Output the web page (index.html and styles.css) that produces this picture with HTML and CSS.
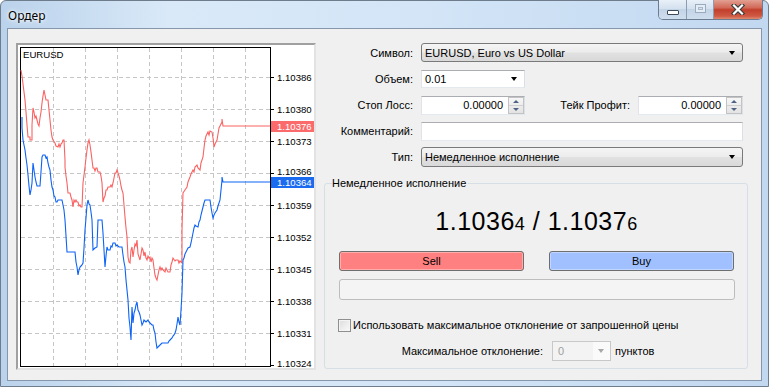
FILE: index.html
```html
<!DOCTYPE html>
<html>

<head>
  <meta charset="UTF-8">
  <title>Ордер</title>
  <link rel="stylesheet" href="styles.css">
</head>

<body>
  <div class="window">
    <div class="titlebar">
      <span class="title">Ордер</span>
      <div class="caption-buttons">
        <div class="cap-btn cap-min"><span class="min-glyph"></span></div>
        <div class="cap-btn cap-max"><span class="max-glyph"></span></div>
        <div class="cap-btn cap-close">
          <svg width="16" height="11" viewBox="0 0 16 11">
            <path d="M4 1.5 L12 9.5 M12 1.5 L4 9.5" stroke="#3b3b3b" stroke-width="4.4" stroke-linecap="square" />
            <path d="M4 1.5 L12 9.5 M12 1.5 L4 9.5" stroke="#ffffff" stroke-width="2.2" stroke-linecap="square" />
          </svg>
        </div>
      </div>
    </div>

    <div class="client">
      <!-- график тиков -->
      <div class="chart-panel">
        <svg class="chart" width="296" height="323" viewBox="18 45 296 323">
          <rect x="18" y="45" width="296" height="323" fill="#ffffff" />
          <path class="grid"
            d="M21 77.5 H270 M21 109.5 H270 M21 141.5 H270 M21 173.5 H270 M21 205.5 H270 M21 237.5 H270 M21 269.5 H270 M21 301.5 H270 M21 333.5 H270
               M53.5 48 V366 M85.5 48 V366 M117.5 48 V366 M149.5 48 V366 M181.5 48 V366 M213.5 48 V366 M245.5 48 V366" />
          <rect x="20.5" y="47.5" width="250" height="319" fill="none" stroke="#000" />
          <path d="M270 77.5 h4 M270 109.5 h4 M270 141.5 h4 M270 173.5 h4 M270 205.5 h4 M270 237.5 h4 M270 269.5 h4 M270 301.5 h4 M270 333.5 h4 M270 365.5 h4" stroke="#000" />

          <polyline class="ask"
            points="21,70 22,76 23,84 24,92 25,100 26,112 27,125 28,137 30,137 30,140 32,140 32,125 33,108 34,112 35,118 36,116 37,120 38,124 39,126 40,118 41,112 42,103 43,96 44,90 45,95 46,100 48,100 49,110 50,120 51,130 52,137 53,140 55,143 56,146 58,147 59,144 60,147 61,144 62,143 63,140 64,140 65,160 65,167 66,176 67,183 68,193 70,193 71,197 72,200 73,207 74,200 75,202 76,200 77,202 78,202 79,206 80,205 81,207 82,207 83,183 84,175 85,167 86,158 87,150 88,143 89,140 90,145 91,152 92,160 93,168 94,168 95,171 96,168 97,168 98,172 100,172 101,176 102,183 103,202 104,198 105,196 106,190 107,190 108,187 110,187 111,185 112,187 113,183 114,178 115,173 116,173 117,170 118,173 119,176 120,180 121,186 122,190 123,193 124,205 125,217 126,228 127,237 128,257 129,262 130,263 131,250 132,247 133,257 134,250 135,244 136,246 137,240 138,254 139,257 140,260 141,254 142,248 143,250 144,256 145,252 146,258 147,260 148,256 149,258 150,257 151,262 152,258 153,260 154,268 155,275 156,278 157,280 158,275 159,270 160,267 161,270 162,268 163,270 165,272 166,268 168,272 170,272 171,265 172,262 173,258 175,261 176,260 178,260 179,263 180,261 182,263 182,230 183,193 185,190 187,187 188,182 190,177 191,174 193,170 194,172 195,167 197,165 198,168 200,170 201,163 203,157 204,148 205,140 206,136 208,132 209,135 210,131 212,132 213,138 214,147 215,144 217,140 218,134 219,128 220,126 222,122 222,119 223,126 270,126" />

          <polyline class="bid"
            points="22,117 22,128 23,140 24,145 25,150 26,158 27,165 28,175 29,186 30,195 31,190 32,183 33,163 34,170 35,177 36,182 37,186 40,186 41,172 42,157 43,155 45,155 46,158 47,157 48,163 49,167 50,170 51,180 52,187 53,190 54,196 55,197 56,202 57,202 58,200 60,200 62,200 63,205 64,210 65,220 66,236 67,252 70,252 72,252 75,252 76,262 77,267 78,275 79,270 80,267 81,266 82,265 83,263 84,248 85,230 86,218 87,205 88,200 89,204 90,205 91,212 92,220 93,250 95,248 97,247 98,220 100,220 102,220 103,233 104,250 105,267 106,256 107,247 108,250 110,250 111,246 112,247 113,243 115,243 116,246 117,245 119,247 122,247 123,255 124,262 125,267 126,280 127,290 128,300 129,318 130,327 131,340 132,307 133,323 134,313 135,310 136,305 137,302 138,310 139,312 140,315 141,320 142,325 143,323 144,320 146,322 148,320 149,322 150,323 152,325 153,325 154,330 155,333 156,342 157,348 158,347 159,346 160,345 162,343 165,343 168,343 169,341 170,340 172,338 173,336 174,335 175,333 176,330 177,324 178,317 179,322 180,325 181,310 182,293 183,260 184,258 185,254 187,250 188,248 190,247 191,243 192,238 193,233 194,228 195,225 196,226 198,227 199,222 200,220 201,215 202,211 203,207 204,203 205,200 207,200 210,200 211,207 212,213 213,218 214,215 215,213 217,210 218,206 219,203 220,200 221,190 222,180 222,177 223,182 270,182" />

          <text class="axis" x="277" y="81">1.10386</text>
          <text class="axis" x="277" y="113">1.10380</text>
          <text class="axis" x="277" y="145">1.10373</text>
          <text class="axis" x="277" y="175">1.10366</text>
          <text class="axis" x="277" y="209">1.10359</text>
          <text class="axis" x="277" y="241">1.10352</text>
          <text class="axis" x="277" y="273">1.10345</text>
          <text class="axis" x="277" y="305">1.10338</text>
          <text class="axis" x="277" y="337">1.10331</text>
          <text class="axis" x="277" y="367">1.10324</text>

          <rect x="271" y="121" width="43" height="11" fill="#fb6b6b" />
          <text class="axis tag" x="277" y="130">1.10376</text>
          <rect x="271" y="177" width="43" height="11" fill="#1a6bf0" />
          <text class="axis tag" x="277" y="186">1.10364</text>

          <text class="symbol" x="23" y="58">EURUSD</text>
        </svg>
      </div>

      <div class="order-side">
        <div class="form-grid">
          <label>Символ:</label>
          <div class="combo combo-list"><span class="combo-text">EURUSD, Euro vs US Dollar</span><i class="arrow"></i></div>

          <label>Объем:</label>
          <div class="cell">
            <div class="combo combo-edit"><span class="combo-text">0.01</span><i class="arrow"></i></div>
          </div>

          <label>Стоп Лосс:</label>
          <div class="cell">
            <div class="spin">
              <span class="spin-val">0.00000</span>
              <span class="spin-btns"><i class="up"></i><i class="down"></i></span>
            </div>
            <label class="tp-label">Тейк Профит:</label>
            <div class="spin spin-wide">
              <span class="spin-val">0.00000</span>
              <span class="spin-btns"><i class="up"></i><i class="down"></i></span>
            </div>
          </div>

          <label>Комментарий:</label>
          <div class="textbox"></div>

          <label>Тип:</label>
          <div class="combo combo-list combo-tall"><span class="combo-text">Немедленное исполнение</span><i class="arrow"></i></div>
        </div>

        <fieldset class="exec-box">
          <legend>Немедленное исполнение</legend>

          <div class="quote">1.1036<span class="pip">4</span> / 1.1037<span class="pip">6</span></div>

          <div class="trade-buttons">
            <div class="btn btn-sell">Sell</div>
            <div class="btn btn-buy">Buy</div>
          </div>

          <div class="status-bar"></div>

          <div class="check-row">
            <span class="check"></span>
            <span>Использовать максимальное отклонение от запрошенной цены</span>
          </div>

          <div class="dev-row">
            <span class="dev-label">Максимальное отклонение:</span>
            <div class="combo combo-disabled"><span class="combo-text">0</span><i class="arrow"></i></div>
            <span>пунктов</span>
          </div>
        </fieldset>
      </div>
    </div>
  </div>
</body>

</html>
```

FILE: styles.css
```css
* {
  box-sizing: border-box;
}

body {
  margin: 0;
  font-family: "Liberation Sans", Arial, sans-serif;
  font-size: 11px;
  color: #000;
  background: #ffffff;
}

.window {
  width: 769px;
  height: 387px;
  display: flex;
  flex-direction: column;
  padding: 0 6px 5px 6px;
  border: 1px solid #6f7c8b;
  border-radius: 6px 6px 0 0;
  background: linear-gradient(to right, #bad2eb 0%, #d9e9f8 22%, #d3e5f7 55%, #c2d8f0 100%);
}

.titlebar {
  height: 27px;
  display: flex;
  align-items: flex-start;
}

.title {
  font-family: "Noto Sans", sans-serif;
  font-size: 12px;
  padding-top: 6px;
  padding-left: 1px;
  text-shadow: 0 0 6px #fff, 0 0 3px #fff;
}

.caption-buttons {
  margin-left: auto;
  margin-right: -1px;
  margin-top: -1px;
  display: flex;
  height: 20px;
  border: 1px solid #6c7d92;
  border-top: none;
  border-radius: 0 0 5px 5px;
  overflow: hidden;
}

.cap-btn {
  display: flex;
  align-items: center;
  justify-content: center;
}

.cap-min,
.cap-max {
  width: 28px;
  background: linear-gradient(#e9f0f8, #d4e1ef 45%, #c3d4e7 50%, #cfdeee);
  border-right: 1px solid #8c9db1;
}

.cap-max {
  width: 27px;
}

.min-glyph {
  width: 12px;
  height: 5px;
  margin-top: 6px;
  background: #fff;
  border: 1px solid #3d4a5a;
  border-radius: 1px;
}

.max-glyph {
  width: 11px;
  height: 9px;
  margin-bottom: 3px;
  border: 1px solid #9aabbe;
  box-shadow: inset 0 0 0 2px #e4ecf5, inset 0 0 0 3px #a9b8c9;
}

.cap-close {
  width: 48px;
  background: linear-gradient(#e2a092, #d26a58 40%, #c13f2b 52%, #cf5a44 85%, #e08a70);
}

.client {
  flex: 1;
  display: flex;
  gap: 8px;
  padding: 14px 13px 0 8px;
  background: #f0f0f0;
  border: 1px solid #8797ab;
}

/* график */
.chart-panel {
  width: 300px;
  height: 327px;
  border: 2px solid;
  border-color: #a0a0a0 #e3e3e3 #e3e3e3 #a0a0a0;
  background: #fff;
}

.chart {
  display: block;
}

.grid {
  stroke: #c6c6c6;
  stroke-width: 1;
  stroke-dasharray: 4 3;
  fill: none;
}

.ask,
.bid {
  fill: none;
  stroke-width: 1.1;
  stroke-linejoin: miter;
}

.ask {
  stroke: #fa6262;
}

.bid {
  stroke: #0d63f5;
}

.axis {
  font-family: "Liberation Sans", Arial, sans-serif;
  font-size: 9.6px;
  fill: #000;
}

.tag {
  fill: #fff;
}

.symbol {
  font-family: "Liberation Sans", Arial, sans-serif;
  font-size: 9.6px;
  fill: #000;
}

/* форма */
.order-side {
  width: 424px;
  display: flex;
  flex-direction: column;
}

.form-grid {
  display: grid;
  grid-template-columns: 89px 322px;
  grid-auto-rows: 20px;
  column-gap: 8px;
  row-gap: 6px;
}

.form-grid > label {
  align-self: center;
  text-align: right;
}

.cell {
  display: flex;
  align-items: center;
}

.combo {
  display: flex;
  align-items: center;
  height: 20px;
}

.combo-text {
  flex: 1;
}

.arrow {
  width: 0;
  height: 0;
  border-left: 3.5px solid transparent;
  border-right: 3.5px solid transparent;
  border-top: 4px solid #000;
}

.combo-list {
  height: 19px;
  padding: 0 7px 0 3px;
  border: 1px solid #7a7a7a;
  border-radius: 3px;
  background: linear-gradient(#f5f5f5, #ececec 48%, #e1e1e1 52%, #d9d9d9);
}

.combo-tall {
  height: 20px;
}

.combo-edit {
  width: 104px;
  height: 18px;
  padding: 0 7px 0 3px;
  border: 1px solid;
  border-color: #abadb3 #dbdfe6 #e3e9ef #e2e3ea;
  background: #fff;
}

.spin {
  width: 104px;
  height: 19px;
  display: flex;
  border: 1px solid;
  border-color: #abadb3 #dbdfe6 #e3e9ef #e2e3ea;
  background: #fff;
}

.spin-wide {
  width: 105px;
}

.spin-val {
  flex: 1;
  text-align: right;
  padding-right: 5px;
  line-height: 17px;
}

.spin-btns {
  width: 16px;
  display: flex;
  flex-direction: column;
  border: 1px solid #c3c3c3;
  background: linear-gradient(#f6f6f6, #e3e3e3);
}

.spin-btns i {
  flex: 1;
  display: flex;
  align-items: center;
  justify-content: center;
}

.spin-btns i::after {
  content: "";
  border-left: 3px solid transparent;
  border-right: 3px solid transparent;
}

.spin-btns .up {
  border-bottom: 1px solid #d0d0d0;
}

.spin-btns .up::after {
  border-bottom: 3px solid #4f6283;
}

.spin-btns .down::after {
  border-top: 3px solid #4f6283;
}

.tp-label {
  flex: 1;
  text-align: right;
  padding-right: 8px;
}

.textbox {
  height: 19px;
  align-self: center;
  border: 1px solid;
  border-color: #abadb3 #dbdfe6 #e3e9ef #e2e3ea;
  background: #fff;
}

/* блок исполнения */
.exec-box {
  height: 192px;
  margin: 10px 0 0 0;
  padding: 0 13px 0 14px;
  border: 1px solid #d5dfe5;
  border-radius: 3px;
}

.exec-box legend {
  margin-left: -7px;
  padding: 0 2px 0 0;
  line-height: 13px;
}

.quote {
  margin-top: 16px;
  height: 30px;
  line-height: 30px;
  font-size: 25px;
  text-align: center;
  letter-spacing: 0.5px;
}

.pip {
  font-size: 18px;
}

.trade-buttons {
  display: flex;
  gap: 25px;
  margin-top: 15px;
}

.btn {
  flex: 1;
  height: 20px;
  line-height: 18px;
  text-align: center;
  border: 1px solid #6e6e6e;
  border-radius: 3px;
  box-shadow: inset 0 0 0 1px rgba(255, 255, 255, 0.35);
}

.btn-sell {
  background: #ff8080;
}

.btn-buy {
  background: #a0c0ff;
}

.status-bar {
  height: 21px;
  margin-top: 8px;
  margin-right: -1px;
  border: 1px solid #bdbdbd;
  border-radius: 3px;
  background: #f4f4f4;
}

.check-row {
  display: flex;
  align-items: center;
  gap: 2px;
  margin-top: 18px;
  margin-left: -1px;
  height: 14px;
}

.check {
  width: 13px;
  height: 13px;
  border: 1px solid #8e8f8f;
  background: linear-gradient(135deg, #dcdcdc, #fbfbfb);
  box-shadow: inset 0 0 0 1px #f4f4f4;
}

.dev-row {
  display: flex;
  align-items: center;
  margin-top: 9px;
}

.dev-label {
  width: 204px;
  text-align: right;
  margin-right: 9px;
}

.combo-disabled {
  width: 59px;
  height: 20px;
  padding: 0 6px 0 5px;
  margin-right: 4px;
  color: #a0a0a0;
  border: 1px solid #c8c8c8;
  background: linear-gradient(to right, #f3f3f3 70%, #fafafa 70%);
}

.combo-disabled .arrow {
  border-top-color: #a8a8a8;
}
```
